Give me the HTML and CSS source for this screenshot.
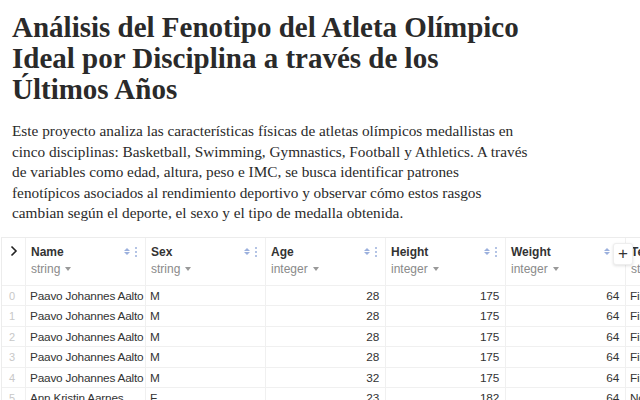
FILE: index.html
```html
<!DOCTYPE html>
<html lang="es">
<head>
    <meta charset="UTF-8">
    <title>Fenotipo del Atleta Olímpico</title>
    <link rel="stylesheet" href="styles.css">
</head>
<body>

    <h1 class="title">Análisis del Fenotipo del Atleta Olímpico Ideal por Disciplina a través de los Últimos Años</h1>

    <p class="intro">Este proyecto analiza las características físicas de atletas olímpicos medallistas en<br>
        cinco disciplinas: Basketball, Swimming, Gymnastics, Football y Athletics. A través<br>
        de variables como edad, altura, peso e IMC, se busca identificar patrones<br>
        fenotípicos asociados al rendimiento deportivo y observar cómo estos rasgos<br>
        cambian según el deporte, el sexo y el tipo de medalla obtenida.</p>

    <div class="frame">
        <div class="grid">
            <div class="cell head idx">
                <svg class="chev" width="8" height="12" viewBox="0 0 8 12"><path d="M1.5 1.5 L6 6 L1.5 10.5" fill="none" stroke="#222" stroke-width="1.6"/></svg>
            </div>
            <div class="cell head"><div class="col-top"><b>Name</b><span class="tools"><span class="sort"></span><span class="dots"></span></span></div><span class="type">string</span></div>
            <div class="cell head"><div class="col-top"><b>Sex</b><span class="tools"><span class="sort"></span><span class="dots"></span></span></div><span class="type">string</span></div>
            <div class="cell head"><div class="col-top"><b>Age</b><span class="tools"><span class="sort"></span><span class="dots"></span></span></div><span class="type">integer</span></div>
            <div class="cell head"><div class="col-top"><b>Height</b><span class="tools"><span class="sort"></span><span class="dots"></span></span></div><span class="type">integer</span></div>
            <div class="cell head"><div class="col-top"><b>Weight</b><span class="tools"><span class="sort"></span><span class="dots"></span></span></div><span class="type">integer</span></div>
            <div class="cell head"><div class="col-top"><b>Team</b></div><span class="type">string</span></div>
        </div>
        <div class="grid" id="rows"></div>
        <button class="add-col">+</button>
    </div>

    <script>
        const rows = [
            ["Paavo Johannes Aalto", "M", 28, 175, 64, "Finland"],
            ["Paavo Johannes Aalto", "M", 28, 175, 64, "Finland"],
            ["Paavo Johannes Aalto", "M", 28, 175, 64, "Finland"],
            ["Paavo Johannes Aalto", "M", 28, 175, 64, "Finland"],
            ["Paavo Johannes Aalto", "M", 32, 175, 64, "Finland"],
            ["Ann Kristin Aarnes", "F", 23, 182, 64, "Norway"]
        ];

        const body = document.getElementById("rows");
        rows.forEach((r, i) => {
            const cells = [i].concat(r);
            cells.forEach((v, c) => {
                const div = document.createElement("div");
                div.classList.add("cell");
                if (c === 0) div.classList.add("idx");
                if (typeof v === "number" && c > 0) div.classList.add("num");
                div.innerText = v;
                body.appendChild(div);
            });
        });
    </script>
</body>
</html>
```

FILE: styles.css
```css
body {
    margin: 0;
    background: #ffffff;
    color: #1b1e23;
}

.title {
    font-family: "Liberation Serif", "DejaVu Serif", serif;
    font-size: 29px;
    font-weight: bold;
    line-height: 31px;
    color: #2a2a2a;
    margin: 12px 0 0 12px;
    max-width: 520px;
}

.intro {
    font-family: "Liberation Serif", "DejaVu Serif", serif;
    font-size: 15.3px;
    line-height: 20.5px;
    color: #2a2a2a;
    margin: 16px 0 0 12px;
    white-space: nowrap;
}

/* data table */
.frame {
    position: relative;
    margin-top: 13px;
    margin-left: 1px;
    border-top: 1px solid #ececec;
    border-left: 1px solid #ececec;
    overflow: hidden;
    font-family: "Liberation Sans", Arial, sans-serif;
    font-size: 11.8px;
    letter-spacing: -0.2px;
    color: #333;
}

.grid {
    display: grid;
    grid-template-columns: 24px repeat(5, 120px) 120px;
}

.cell {
    height: 20.5px;
    line-height: 20.5px;
    padding: 0 4px;
    border-right: 1px solid #f0f0f0;
    border-bottom: 1px solid #f0f0f0;
    box-sizing: border-box;
    white-space: nowrap;
    overflow: hidden;
}

.cell.idx {
    color: #c8c8c8;
    padding: 0 0 0 7px;
    font-size: 11px;
}

.cell.num {
    text-align: right;
    padding-right: 6px;
}

.cell.head {
    height: 48px;
    line-height: 14px;
    padding: 7px 5px 0;
    font-size: 12px;
    letter-spacing: 0;
}

.cell.head.idx {
    padding: 7px 0 0 8px;
}

.col-top {
    display: flex;
    justify-content: space-between;
    align-items: center;
}

.col-top b {
    color: #333;
}

.tools {
    display: flex;
    align-items: center;
    gap: 5px;
    padding-right: 3px;
}

/* up/down arrows */
.sort {
    display: inline-flex;
    flex-direction: column;
    gap: 1px;
}
.sort::before,
.sort::after {
    content: "";
    border-left: 3px solid transparent;
    border-right: 3px solid transparent;
}
.sort::before {
    border-bottom: 3px solid #9bb0dd;
}
.sort::after {
    border-top: 3px solid #9bb0dd;
}

.dots {
    width: 2px;
    height: 2px;
    border-radius: 50%;
    background: #9bb0dd;
    box-shadow: 0 -4px 0 #9bb0dd, 0 4px 0 #9bb0dd;
}

.type {
    display: block;
    margin-top: 3px;
    color: #8a8a8a;
}
.type::after {
    content: "";
    display: inline-block;
    margin-left: 5px;
    vertical-align: 2px;
    border-left: 3px solid transparent;
    border-right: 3px solid transparent;
    border-top: 4px solid #999;
}

.add-col {
    position: absolute;
    top: 5px;
    left: 611px;
    width: 20px;
    height: 22px;
    padding: 0;
    border: 1px solid #eee;
    border-radius: 3px;
    background: #fff;
    box-shadow: 0 1px 3px rgba(0, 0, 0, 0.12);
    font-family: "Liberation Sans", Arial, sans-serif;
    font-size: 17px;
    color: #333;
}
```
